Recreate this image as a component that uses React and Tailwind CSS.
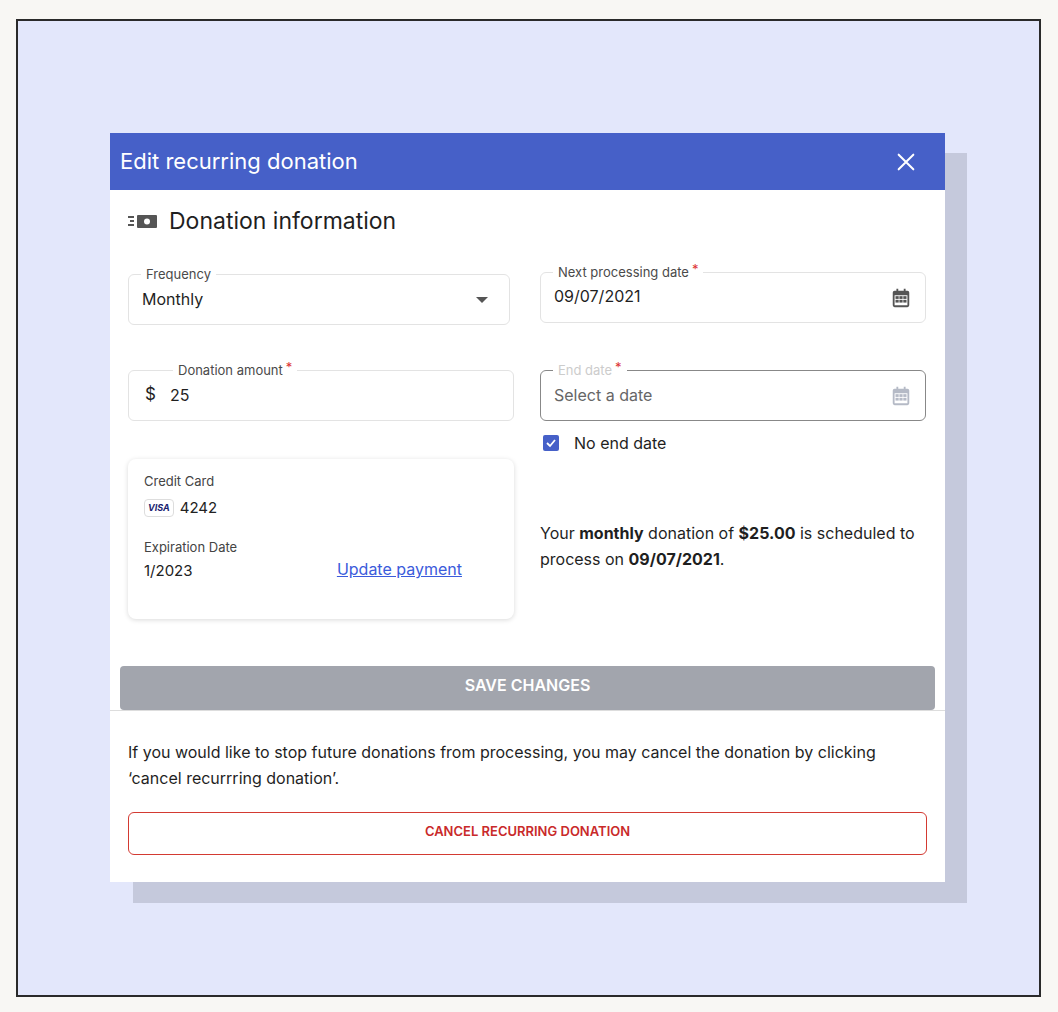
import React from "react";

const Cal = ({ c }) => (
  <svg width="22" height="22" viewBox="0 0 24 24" fill={c}>
    <path d="M7 2h2v2h6V2h2v2h2a2 2 0 0 1 2 2v14a2 2 0 0 1-2 2H5a2 2 0 0 1-2-2V6a2 2 0 0 1 2-2h2V2zM5 9v11h14V9H5z" />
    <rect x="6" y="10" width="3.5" height="3" /><rect x="10.25" y="10" width="3.5" height="3" /><rect x="14.5" y="10" width="3.5" height="3" />
    <rect x="6" y="14" width="3.5" height="3" /><rect x="10.25" y="14" width="3.5" height="3" /><rect x="14.5" y="14" width="3.5" height="3" />
  </svg>
);

function Field({ label, req, labelColor = "text-[#4a4a4a]", border = "border-[#e3e3e3]", children, labelLeft = "left-[12px]" }) {
  return (
    <div className={`relative h-[51px] rounded-md border ${border} flex items-center px-[13px]`}>
      <div className={`absolute -top-[9px] ${labelLeft} bg-white px-[5px] text-[13px] leading-[16px] ${labelColor}`}>
        {label}
        {req && <span className="text-[#d33] ml-[3px] relative -top-[3px]">*</span>}
      </div>
      {children}
    </div>
  );
}

export default function App() {
  return (
    <div className="w-[1058px] h-[1012px] bg-[#f8f7f4] pt-[19px] pl-[16px]" style={{ fontFamily: "Inter, 'Noto Sans', sans-serif" }}>
      <div className="w-[1025px] h-[978px] border-2 border-[#2a2a2a] bg-[#e3e7fb] pt-[112px] pl-[92px]">
        <div className="relative w-[835px]">
          <div className="absolute left-[23px] top-[20px] w-[834px] h-[750px] bg-[#c5c9dc]" />
          <div className="relative bg-white h-[749px] text-[#1f1f1f]">
            <div className="h-[57px] bg-[#4660c8] flex items-center justify-between pl-[10px] pr-[28px] text-white">
              <span className="text-[22px]">Edit recurring donation</span>
              <svg width="22" height="22" viewBox="0 0 24 24" stroke="white" strokeWidth="2.2" strokeLinecap="round"><path d="M4 4l16 16M20 4L4 20" /></svg>
            </div>
            <div className="flex items-center gap-[10px] pl-[18px] h-[62px]">
              <svg width="31" height="16" viewBox="0 0 31 16" fill="#555">
                <rect x="0" y="3" width="6" height="2" /><rect x="2" y="7" width="4" height="2" /><rect x="0" y="11" width="6" height="2" />
                <rect x="9" y="2" width="20" height="13" rx="1" />
                <circle cx="19" cy="8.5" r="3" fill="white" />
              </svg>
              <span className="text-[23px]">Donation information</span>
            </div>
            <div className="grid grid-cols-[386px_386px] gap-x-[26px] pl-[18px] pt-[20px]">
              <div className="flex flex-col">
                <div className="w-[382px] mt-[2px]">
                  <Field label="Frequency">
                    <span className="text-[16px] flex-1 -mt-[1px]">Monthly</span>
                    <svg width="12" height="6" viewBox="0 0 12 6" className="mr-[8px]"><path d="M0 0h12L6 6z" fill="#555" /></svg>
                  </Field>
                </div>
                <div className="mt-[45px]">
                  <Field label="Donation amount" req labelLeft="left-[44px]">
                    <span className="text-[17px] mr-[14px] ml-[3px] -mt-[2px]">$</span>
                    <span className="text-[16px] -mt-[2px]">25</span>
                  </Field>
                </div>
                <div className="mt-[38px] rounded-lg shadow-[0_1px_5px_rgba(0,0,0,0.15)] h-[160px] px-[16px] pt-[13px] text-[#222]">
                  <div className="text-[13px] text-[#444]">Credit Card</div>
                  <div className="flex items-center gap-[6px] mt-[5px]">
                    <span className="border border-[#ddd] rounded px-[3px] text-[9px] font-bold italic text-[#1a1f71] leading-[16px]">VISA</span>
                    <span className="text-[15px]">4242</span>
                  </div>
                  <div className="text-[13px] text-[#444] mt-[19px]">Expiration Date</div>
                  <div className="flex justify-between items-center mt-[2px] pr-[36px]">
                    <span className="text-[15px]">1/2023</span>
                    <span className="text-[16px] text-[#3b5bdb] underline -mt-[3px]">Update payment</span>
                  </div>
                </div>
              </div>
              <div className="flex flex-col">
                <Field label="Next processing date" req>
                  <span className="text-[16px] flex-1 -mt-[3px]">09/07/2021</span>
                  <Cal c="#555" />
                </Field>
                <div className="mt-[47px]">
                  <Field label="End date" req border="border-[#888] border-[1.5px]" labelColor="text-[#ccc]">
                    <span className="text-[16px] flex-1 text-[#666] -mt-[2px]">Select a date</span>
                    <Cal c="#b5bac6" />
                  </Field>
                </div>
                <div className="flex items-center gap-[15px] mt-[10px] ml-[3px]">
                  <span className="w-[16px] h-[16px] rounded-[2px] bg-[#4660c8] flex items-center justify-center">
                    <svg width="12" height="12" viewBox="0 0 12 12"><path d="M2 6l3 3 5-6" stroke="white" strokeWidth="1.8" fill="none" /></svg>
                  </span>
                  <span className="text-[16px]">No end date</span>
                </div>
                <p className="text-[16px] leading-[26px] mt-[65px]">
                  Your <b>monthly</b> donation of <b>$25.00</b> is scheduled to process on <b>09/07/2021</b>.
                </p>
              </div>
            </div>
            <div className="mx-[10px] mt-[47px] h-[44px] rounded bg-[#a2a5ad] flex items-center justify-center text-white font-semibold text-[16px] pb-[6px]">SAVE CHANGES</div>
            <div className="border-t border-[#ddd] px-[18px] pt-[28px]">
              <p className="text-[16px] leading-[26px]">If you would like to stop future donations from processing, you may cancel the donation by clicking ‘cancel recurrring donation’.</p>
              <div className="mt-[21px] h-[43px] border-[1.5px] border-[#d33a32] rounded-md flex items-center justify-center text-[#c92a2a] text-[13px] font-semibold pb-[4px]">CANCEL RECURRING DONATION</div>
            </div>
          </div>
        </div>
      </div>
    </div>
  );
}
